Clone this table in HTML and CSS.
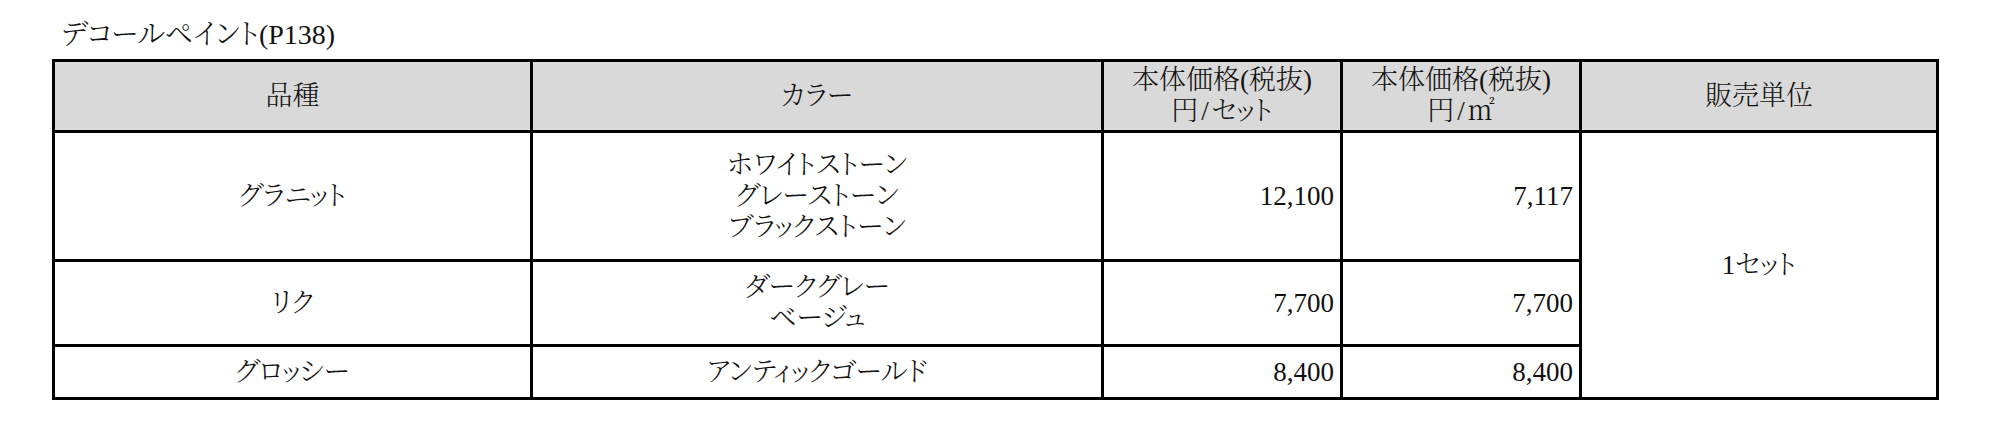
FILE: index.html
```html
<!DOCTYPE html>
<html lang="ja">
<head>
<meta charset="utf-8">
<title>デコールペイント</title>
<link rel="stylesheet" href="styles.css">
</head>
<body>
<div class="page">
  <h2 class="title">デコールペイント(P138)</h2>
  <table class="price">
    <colgroup>
      <col class="c-kind">
      <col class="c-color">
      <col class="c-set">
      <col class="c-m2">
      <col class="c-unit">
    </colgroup>
    <thead>
      <tr class="r-head">
        <th>品種</th>
        <th>カラー</th>
        <th>本体価格(税抜)<br>円<span class="slash">/</span>セット</th>
        <th>本体価格(税抜)<br>円<span class="slash">/</span>㎡</th>
        <th>販売単位</th>
      </tr>
    </thead>
    <tbody>
      <tr class="r-1">
        <td class="center">グラニット</td>
        <td class="center">ホワイトストーン<br>グレーストーン<br>ブラックストーン</td>
        <td class="num">12,100</td>
        <td class="num">7,117</td>
        <td class="center" rowspan="3">1セット</td>
      </tr>
      <tr class="r-2">
        <td class="center">リク</td>
        <td class="center">ダークグレー<br>ベージュ</td>
        <td class="num">7,700</td>
        <td class="num">7,700</td>
      </tr>
      <tr class="r-3">
        <td class="center">グロッシー</td>
        <td class="center">アンティックゴールド</td>
        <td class="num">8,400</td>
        <td class="num">8,400</td>
      </tr>
    </tbody>
  </table>
</div>
</body>
</html>
```
FILE: styles.css
```css
html, body {
  margin: 0;
  padding: 0;
  background: #ffffff;
}

body {
  font-family: "Liberation Serif", "Noto Serif CJK JP", "Noto Sans CJK JP", serif;
  color: #111111;
  font-feature-settings: "palt";
}

.page {
  padding: 18px 0 0 52px;
}

.title {
  margin: 0 0 8px 9px;
  font-size: 28px;
  font-weight: 300;
  line-height: 33px;
  letter-spacing: 0;
}

.price {
  border-collapse: collapse;
  table-layout: fixed;
  width: 1887px;
  font-size: 27px;
  font-weight: 300;
  line-height: 31px;
}

.c-kind { width: 478px; }
.c-color { width: 571px; }
.c-set { width: 239px; }
.c-m2 { width: 239px; }
.c-unit { width: 357px; }

.price th,
.price td {
  border: 3px solid #000000;
  padding: 0 6px;
  vertical-align: middle;
}

.price th {
  background: #d9d9d9;
  font-weight: 300;
  text-align: center;
}

.slash {
  margin: 0 3px;
}

.r-head { height: 71px; }
.r-1 { height: 129px; }
.r-2 { height: 85px; }
.r-3 { height: 53px; }

.center { text-align: center; }
.num { text-align: right; }
```
